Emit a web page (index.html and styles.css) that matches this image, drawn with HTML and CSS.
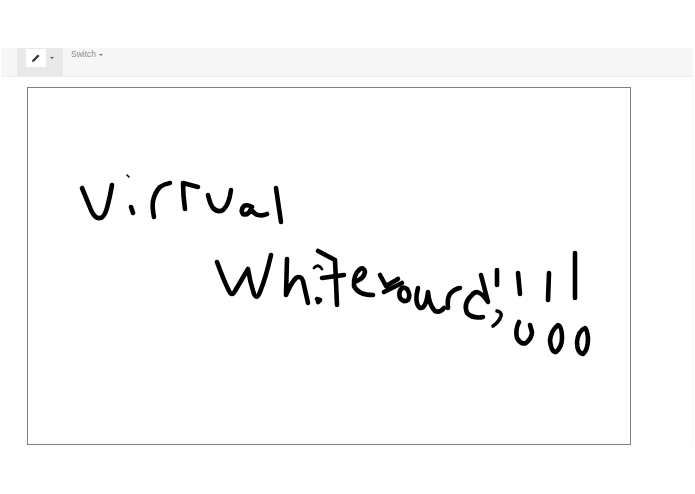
FILE: index.html
```html
<!DOCTYPE html>
<html lang="en">
<head>
<meta charset="utf-8">
<title>Virtual Whiteboard</title>
<link rel="stylesheet" href="styles.css">
</head>
<body>
<div class="toolbar">
  <div class="tool-group">
    <button class="tool-btn" type="button" aria-label="Pen">
      <svg class="pen" viewBox="0 0 10 10" width="10" height="10"><path d="M1 9 L1.6 6.8 L6.9 1.5 L8.5 3.1 L3.2 8.4 Z" fill="#333"/></svg>
    </button>
    <span class="caret caret-dark"></span>
  </div>
  <div class="switch">Switch<span class="caret"></span></div>
</div>
<main class="stage">
  <div class="board">
    <svg class="ink" viewBox="28 88 602 356" width="602" height="356" fill="none" stroke="#000" stroke-width="4.6" stroke-linecap="round" stroke-linejoin="round">
      <!-- Virtual -->
      <path d="M82 188 Q87 200 91 210 Q95 219 100 218 Q104 218 107 208 Q110 197 112 185"/>
      <path d="M127 175 L129 177" stroke-width="1.6"/>
      <path d="M131 207 L133 213"/>
      <path d="M154 217 Q152 207 153 201 Q155 192 160 187 Q164 184 170 183"/>
      <path d="M185 209 Q183 195 183 183 L198 187"/>
      <path d="M208 195 Q210 204 213 208 Q218 213 223 210 Q229 205 231 190"/>
      <path d="M252 207 Q247 204 244 206 Q240 210 243 214 Q248 216 251 209 Q254 214 258 215 Q263 216 267 214"/>
      <path d="M276 188 L281 222"/>
      <!-- Whiteboard -->
      <path d="M217 262 Q224 281 229 291 Q232 297 235 291 L248 269 Q250 282 254 294 Q257 300 260 292 Q266 277 271 255"/>
      <path d="M287 259 L286 295 Q291 283 296 278 Q301 275 303 281 L308 303"/>
      <path d="M314 268 Q318 263 322 269" stroke-width="2.8"/>
      <path d="M317 299 L320 300 L318 302"/>
      <path d="M318 251 L335 260 L337 305"/>
      <path d="M322 278 L344 275"/>
      <path d="M357 281 Q364 278 365 272 Q364 267 360 269 Q353 275 354 286 Q358 295 373 295"/>
      <path d="M380 275 L386 286 L398 279 M384 292 L402 283"/>
      <path d="M402 288 Q398 292 400 298 Q404 303 408 300 Q411 295 407 289 Q404 287 402 288 Z"/>
      <path d="M418 288 Q414 303 420 308 Q426 309 428 292 Q429 305 435 311 Q440 313 444 308"/>
      <path d="M448 308 Q447 298 450 294 Q454 289 460 288"/>
      <path d="M481 275 L488 302 Q478 287 472 295 Q463 303 467 313 Q473 319 483 317"/>
      <path d="M497 270 L497 285"/>
      <path d="M518 273 L520 294"/>
      <path d="M549 273 L548 300"/>
      <path d="M575 253 L575 298"/>
      <path d="M497 311 Q502 312 501 316 Q499 322 493 326" stroke-width="3.6"/>
      <path d="M519 322 Q515 330 517 338 Q521 345 526 343 Q532 338 532 332 L530 325"/>
      <path d="M558 325 Q551 331 550 340 Q551 352 556 352 Q562 347 562 338 Q562 326 558 325 Z"/>
      <path d="M585 328 Q578 331 577 342 Q577 353 583 354 Q588 350 588 338 Q587 329 585 328 Z"/>
    </svg>
  </div>
</main>
</body>
</html>
```
FILE: styles.css
```css
html, body {
  margin: 0;
  padding: 0;
  background: #fff;
  font-family: "Liberation Sans", Arial, sans-serif;
}
body {
  padding-top: 48px;
  min-height: 446px;
  box-sizing: border-box;
}
.toolbar {
  display: flex;
  align-items: flex-start;
  width: 692px;
  height: 29px;
  margin-left: 1px;
  padding-left: 16px;
  box-sizing: border-box;
  background: #f6f6f6;
  border-bottom: 1px solid #eeeeee;
}
.tool-group {
  display: flex;
  align-items: center;
  gap: 1px;
  align-self: stretch;
  width: 46px;
  height: 28px;
  padding: 1px 0 9px 9px;
  box-sizing: border-box;
  background: #e9e9e9;
}
.tool-btn {
  display: flex;
  align-items: center;
  justify-content: center;
  width: 20px;
  height: 18px;
  padding: 0;
  border: 0;
  background: #fff;
}
.caret {
  display: inline-block;
  width: 0;
  height: 0;
  margin-left: 3px;
  vertical-align: middle;
  border-top: 2px solid #777;
  border-left: 2px solid transparent;
  border-right: 2px solid transparent;
}
.caret-dark {
  border-top-color: #555;
}
.switch {
  margin: 1px 0 0 8px;
  font-size: 8.5px;
  line-height: 10px;
  color: #8a8a8a;
  will-change: opacity;
}
.stage {
  width: 693px;
  height: 369px;
  padding: 10px 0 0 27px;
  box-sizing: border-box;
  border-right: 1px solid #f4f4f4;
}
.board {
  width: 604px;
  height: 358px;
  box-sizing: border-box;
  border: 1px solid #808080;
  background: #fff;
}
.ink {
  display: block;
}
```
